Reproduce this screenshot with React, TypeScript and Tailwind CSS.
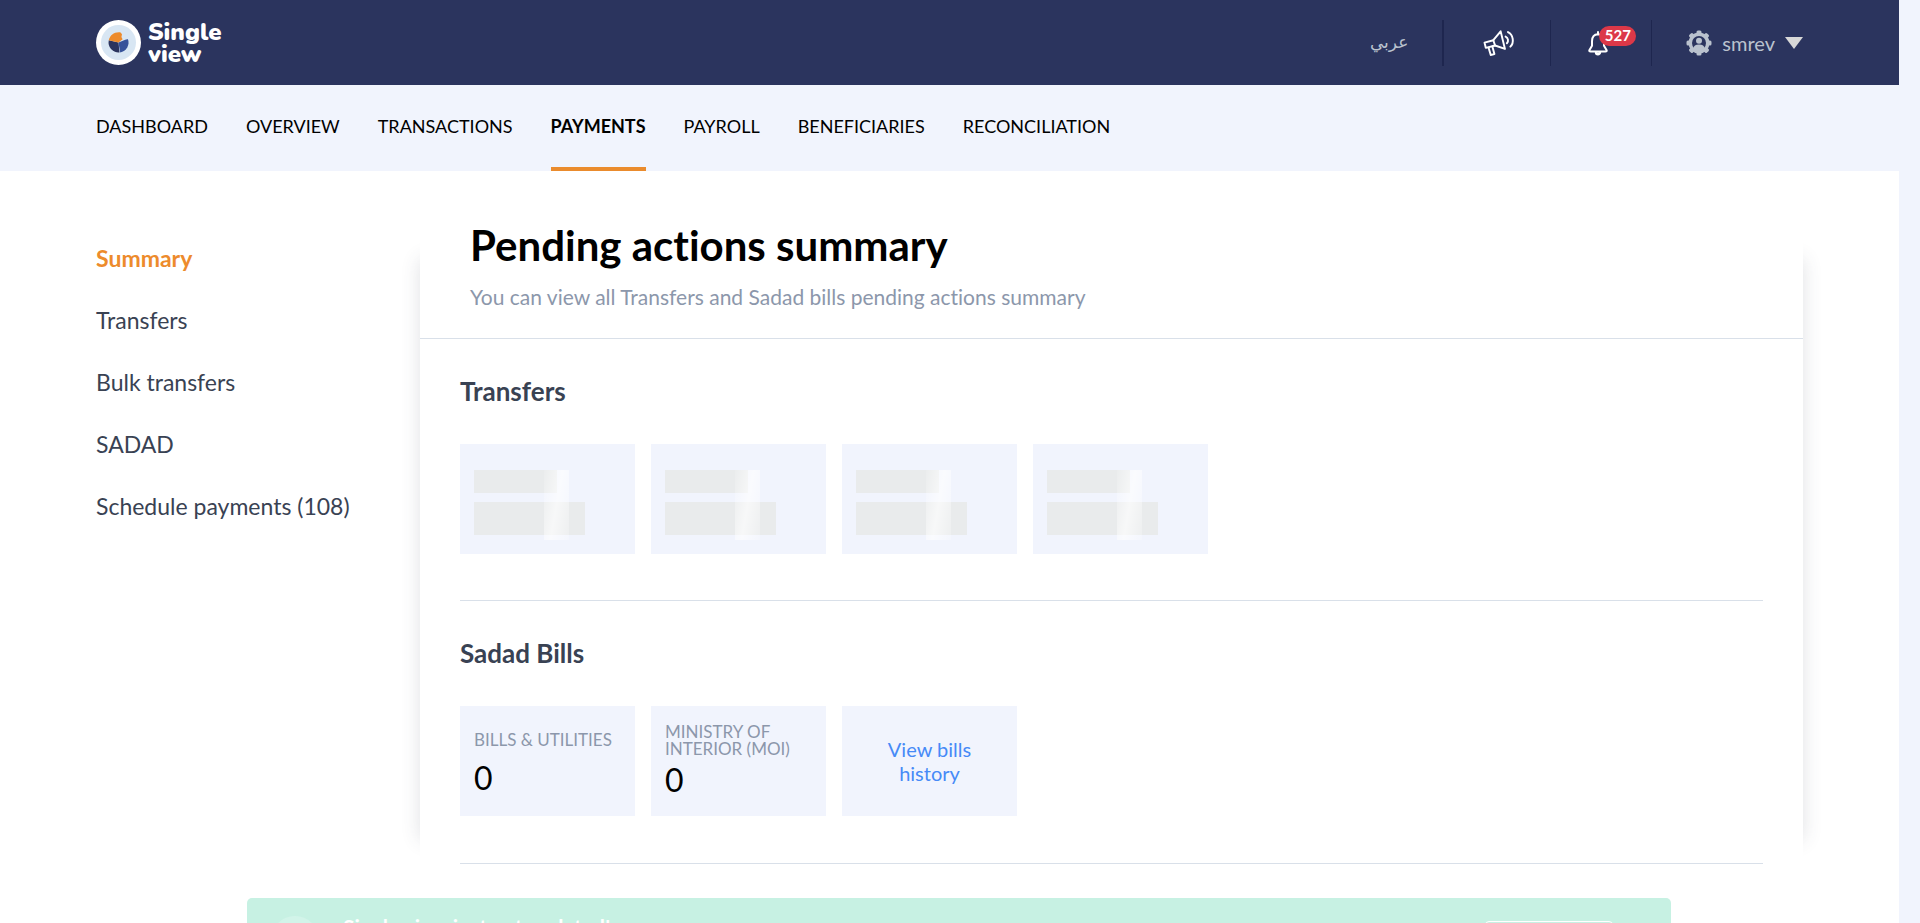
import React from "react";

const navItems = ["DASHBOARD", "OVERVIEW", "TRANSACTIONS", "PAYMENTS", "PAYROLL", "BENEFICIARIES", "RECONCILIATION"];
const sideItems = ["Summary", "Transfers", "Bulk transfers", "SADAD", "Schedule payments (108)"];

function Logo() {
  return (
    <svg width="45" height="45" viewBox="0 0 45 45" aria-hidden="true">
      <circle cx="22.5" cy="22.5" r="22.5" fill="#fff" />
      <circle cx="22.5" cy="22.5" r="17.5" fill="#d8e6f3" />
      <path d="M22.5 22.5 12.8 20.2A10 10 0 0 0 23.5 32.4z" fill="#2b345e" />
      <path d="M22.5 22.5 31.8 18.8A10 10 0 0 1 24.2 32.4z" fill="#37529a" />
      <path d="M22.5 22.5 12.8 20.2C14 15 18.5 11.6 24.6 12.4L26 14.2A4.6 4.6 0 0 0 26.6 19.3z" fill="#ed8b2c" />
      <path d="M26.4 12.6a5 5 0 0 0 5.4 6.6l1.4-2.2-4-5z" fill="#d8e6f3" />
    </svg>
  );
}

function MegaphoneIcon() {
  return (
    <svg width="33" height="28" viewBox="0 0 30 26" fill="none" stroke="#fff" strokeWidth="1.8" strokeLinejoin="round" strokeLinecap="round" aria-hidden="true">
      <path d="M2 12.600 10.200 10.400 17 2.200l4 16.300-9.200-3.200-8.600 2.200z" />
      <path d="m10.200 10.400 1.600 4.900M5.800 17.400l2 6.800 3.400-.9-1.900-7" />
      <path d="M21.600 7c2.400 1 3 4.400 1.200 6.200M23.800 2.800c5 2.400 6 9.800 2.200 13.600" />
    </svg>
  );
}

function BellIcon() {
  return (
    <svg width="20" height="26" viewBox="0 0 20 26" fill="none" stroke="#fff" strokeWidth="2" strokeLinejoin="round" strokeLinecap="round" aria-hidden="true">
      <path d="M10 4.2c-4.2.2-6 3.2-6 7v4.5L1.5 20c-.5 1 0 1.5 1 1.5h15c1 0 1.500-.5 1-1.500L16 15.700v-4.500c0-3.800-1.800-6.800-6-7z" />
      <path d="M10 2v2" />
      <path d="M7.800 22.200a2.200 2.200 0 0 0 4.400 0" fill="#fff" />
    </svg>
  );
}

function GearUserIcon() {
  return (
    <svg width="26" height="26" viewBox="0 0 26 26" aria-hidden="true">
      <g fill="#bac2ce">
        <circle cx="13" cy="13" r="10.500" />
        <rect x="10.500" y="0.500" width="5" height="25" rx="1.500" />
        <rect x="10.500" y="0.500" width="5" height="25" rx="1.500" transform="rotate(45 13 13)" />
        <rect x="10.500" y="0.500" width="5" height="25" rx="1.500" transform="rotate(90 13 13)" />
        <rect x="10.500" y="0.500" width="5" height="25" rx="1.500" transform="rotate(135 13 13)" />
      </g>
      <circle cx="13" cy="13" r="7" fill="#2b345e" />
      <circle cx="13" cy="10.800" r="3" fill="#bac2ce" />
      <path d="M7.500 20.500v-2c0-2.500 2-4 5.500-4s5.500 1.500 5.500 4v2z" fill="#bac2ce" />
    </svg>
  );
}

function SkeletonTile() {
  return (
    <div className="h-[110px] w-[175px] bg-[#f1f4fd] pt-[26px] pl-[14px]">
      <div className="relative w-[111px]">
        <div className="h-[23px] w-[83px] bg-[#e9ebec]" />
        <div className="mt-[9px] h-[33px] bg-[#e9ebec]" />
        <div className="absolute top-0 left-[70px] h-[70px] w-[25px] bg-[linear-gradient(100deg,rgba(255,255,255,0.1),rgba(255,255,255,0.65)_50%,rgba(255,255,255,0.2))]" />
      </div>
    </div>
  );
}

function CountTile({ label, count }: { label: string; count: number }) {
  return (
    <div className="flex h-[110px] w-[175px] flex-col justify-center bg-[#f1f4fd] px-[14px]">
      <p className="flex min-h-[30px] items-center text-[17px] leading-[17px] text-[#8c97ab]">{label}</p>
      <p className="mt-[3px] text-[32px] leading-10 text-black">{count}</p>
    </div>
  );
}

export default function App() {
  return (
    <div className="flex h-screen overflow-hidden bg-[#f1f4fd] pr-[21px] font-[Lato,'Noto_Sans',sans-serif] [font-variant-ligatures:none]">
      <div className="relative min-w-0 flex-1 overflow-hidden bg-white">
        <header className="flex h-[85px] items-center justify-between bg-[#2b345e] px-24">
          <a href="#" className="flex items-center gap-[7px] text-white" aria-label="Single view">
            <Logo />
            <span className="flex flex-col font-[Nunito,Lato,sans-serif] text-[24px] leading-[22px] font-black">
              <span>Single</span>
              <span>view</span>
            </span>
          </a>
          <div className="flex h-[46px] items-center text-[#bac2ce]">
            <button lang="ar" className="pr-[34px] font-['DejaVu_Sans',sans-serif] text-[17px]">عربي</button>
            <div className="flex h-full items-center border-l-2 border-[#1e264f] pr-[35px] pl-[38px]">
              <button aria-label="Announcements"><MegaphoneIcon /></button>
            </div>
            <div className="flex h-full items-center border-l border-[#1e264f] pr-[43px] pl-[37px]">
              <button aria-label="Notifications" className="relative">
                <BellIcon />
                <span className="absolute -top-1 left-[11px] flex h-5 w-[37px] items-center justify-center rounded-full bg-[#dc3848] text-[15px] font-bold text-white">527</span>
              </button>
            </div>
            <div className="flex h-full items-center border-l border-[#1e264f] pl-[34px]">
              <button className="flex items-center gap-[10px] text-[20px]">
                <GearUserIcon />
                smrev
                <svg width="18" height="12" viewBox="0 0 18 12" aria-hidden="true"><path d="M0 0h18L9 12z" fill="#d8d8d8" /></svg>
              </button>
            </div>
          </div>
        </header>

        <nav className="flex h-[86px] gap-[38px] bg-[#f1f4fd] px-24 text-[18px] text-black">
          {navItems.map((item) =>
            item === "PAYMENTS" ? (
              <a key={item} href="#" aria-current="page" className="flex items-center border-b-4 border-[#ea8b2d] font-bold">{item}</a>
            ) : (
              <a key={item} href="#" className="flex items-center border-b-4 border-transparent">{item}</a>
            )
          )}
        </nav>

        <div className="flex px-24 pt-12">
          <aside className="w-[324px] shrink-0 pt-6">
            <ul className="flex flex-col gap-8 text-[23px] leading-[30px] text-[#394253]">
              {sideItems.map((item) => (
                <li key={item}>
                  {item === "Summary" ? <a href="#" className="font-bold text-[#ed8b2c]">{item}</a> : <a href="#">{item}</a>}
                </li>
              ))}
            </ul>
          </aside>

          <main className="relative min-w-0 flex-1">
            <div className="absolute inset-x-0 top-10 bottom-6 shadow-[0_0_18px_rgba(60,70,90,0.16)]" />
            <div className="relative bg-white">
              <div className="border-b border-[#d9e0e9] px-[50px] pb-7">
                <h1 className="text-[42px] leading-[52px] font-bold text-black">Pending actions summary</h1>
                <p className="mt-3 text-[21px] leading-[27px] text-[#8c97ab]">You can view all Transfers and Sadad bills pending actions summary</p>
              </div>
              <div className="px-10">
                <section className="border-b border-[#d9e0e9] pt-9 pb-[46px]">
                  <h2 className="text-[26px] leading-8 font-bold text-[#394253]">Transfers</h2>
                  <div className="mt-[37px] flex gap-4">
                    <SkeletonTile />
                    <SkeletonTile />
                    <SkeletonTile />
                    <SkeletonTile />
                  </div>
                </section>
                <section className="border-b border-[#d9e0e9] pt-9 pb-[47px]">
                  <h2 className="text-[26px] leading-8 font-bold text-[#394253]">Sadad Bills</h2>
                  <div className="mt-[37px] flex gap-4">
                    <CountTile label="BILLS & UTILITIES" count={0} />
                    <CountTile label="MINISTRY OF INTERIOR (MOI)" count={0} />
                    <a href="#" className="flex h-[110px] w-[175px] items-center justify-center bg-[#f1f4fd] px-10 text-center text-[20px] leading-6 text-[#468af7]">View bills history</a>
                  </div>
                </section>
              </div>
            </div>
          </main>
        </div>

        <div role="status" className="absolute top-[898px] right-[228px] left-[247px] flex h-24 items-start justify-between rounded-[5px] bg-[#c7f1e3] pr-[58px] pl-6 text-white">
          <div className="flex items-start">
            <span className="mt-[18px] size-12 rounded-full bg-[#d2f4e9]" />
            <p className="mt-[14px] ml-6 text-[21px] leading-[30px] font-bold">Single view just got updated!</p>
          </div>
          <button className="mt-[23px] h-10 w-32 rounded-[4px] border border-white">View</button>
        </div>
      </div>
    </div>
  );
}
